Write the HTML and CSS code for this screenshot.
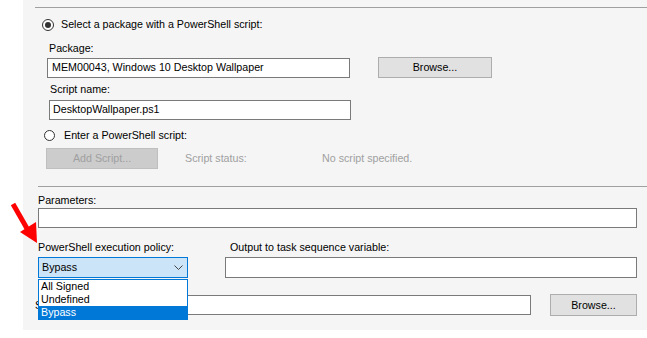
FILE: index.html
```html
<!DOCTYPE html>
<html lang="en">
<head>
    <meta charset="UTF-8">
    <title>Run PowerShell Script</title>
    <link rel="stylesheet" href="styles.css">
</head>
<body>
    <div class="page">
        <div class="panel">
            <div class="group">
                <div class="radio-row first">
                    <span class="radio checked"></span>
                    <span>Select a package with a PowerShell script:</span>
                </div>

                <div class="label pkg-label">Package:</div>
                <div class="pkg-row">
                    <div class="textbox pkg-box">MEM00043, Windows 10 Desktop Wallpaper</div>
                    <div class="btn browse-btn">Browse...</div>
                </div>

                <div class="label script-label">Script name:</div>
                <div class="textbox script-box">DesktopWallpaper.ps1</div>

                <div class="radio-row second">
                    <span class="radio"></span>
                    <span>Enter a PowerShell script:</span>
                </div>

                <div class="add-row">
                    <div class="btn disabled add-btn">Add Script...</div>
                    <span class="dim status-label">Script status:</span>
                    <span class="dim">No script specified.</span>
                </div>
            </div>

            <div class="separator"></div>

            <div class="fields">
                <div class="label params-label">Parameters:</div>
                <div class="textbox params-box"></div>

                <div class="labels-row">
                    <div class="label policy-label">PowerShell execution policy:</div>
                    <div class="label">Output to task sequence variable:</div>
                </div>
                <div class="combo-row">
                    <div class="combo">
                        <span>Bypass</span>
                        <svg class="chevron" width="9" height="5" viewBox="0 0 9 5">
                            <path d="M0.5 0.5 L4.5 4.5 L8.5 0.5" fill="none" stroke="#444" stroke-width="1"/>
                        </svg>
                    </div>
                    <div class="textbox output-box"></div>
                </div>

                <div class="start-row">
                    <!-- mostly hidden behind the open list -->
                    <div class="start-label"><span>Start in:</span></div>
                    <div class="textbox start-box"></div>
                    <div class="btn browse-small">Browse...</div>
                </div>
            </div>

            <!-- open list of the execution policy combo -->
            <div class="dropdown">
                <div class="option">All Signed</div>
                <div class="option">Undefined</div>
                <div class="option selected">Bypass</div>
            </div>
        </div>

        <svg class="arrow" width="40" height="50" viewBox="0 0 40 50">
            <line x1="13" y1="9" x2="29" y2="37" stroke="#f00" stroke-width="5"/>
            <polygon points="20,37 36,27 37,48" fill="#f00"/>
        </svg>
    </div>
</body>
</html>
```

FILE: styles.css
```css
* {
    margin: 0;
    padding: 0;
    box-sizing: border-box;
}

body {
    font-family: 'Liberation Sans', Arial, sans-serif;
    font-size: 10.7px;
    line-height: 13px;
    color: #000;
    background: white;
}

.page {
    position: relative;
    width: 647px;
    height: 338px;
}

.panel {
    position: relative;
    margin-left: 23px;
    width: 624px;
    height: 330px;
    background: #f5f5f5;
    overflow: hidden;
}

.group {
    margin-left: 12px;
    padding-top: 7px;
}

.group > .radio-row:first-child {
    border-top: 1px solid #a0a0a0;
}

.radio-row {
    display: flex;
    align-items: center;
    height: 13px;
}

.radio-row.first {
    padding-top: 10px;
    height: 24px;
    padding-left: 7px;
    gap: 7px;
}

.radio-row.second {
    margin-top: 9px;
    padding-left: 9px;
    gap: 9px;
}

.radio {
    width: 12px;
    height: 12px;
    border: 1px solid #333;
    border-radius: 50%;
    background: white;
    display: flex;
    align-items: center;
    justify-content: center;
}

.radio-row.second .radio {
    width: 11px;
    height: 11px;
}

.radio.checked::after {
    content: '';
    width: 6px;
    height: 6px;
    border-radius: 50%;
    background: #333;
}

.label {
    height: 13px;
    white-space: nowrap;
}

.pkg-label {
    margin-top: 11px;
    margin-left: 14px;
}

.pkg-row {
    display: flex;
    margin-top: 2px;
    margin-left: 12px;
}

.textbox {
    height: 20px;
    background: white;
    border: 1px solid #7a7a7a;
    padding: 2px 4px;
    white-space: nowrap;
}

.pkg-box {
    width: 303px;
    margin-top: 1px;
}

.btn {
    display: flex;
    align-items: center;
    justify-content: center;
    height: 21px;
    background: #e1e1e1;
    border: 1px solid #adadad;
}

.browse-btn {
    width: 114px;
    margin-left: 28px;
}

.script-label {
    margin-top: 5px;
    margin-left: 15px;
}

.script-box {
    width: 302px;
    margin-top: 4px;
    margin-left: 14px;
    padding-left: 3px;
}

.add-row {
    display: flex;
    align-items: center;
    margin-top: 6px;
    margin-left: 11px;
}

.btn.disabled {
    background: #cccccc;
    border-color: #bfbfbf;
    color: #a0a0a0;
}

.add-btn {
    width: 112px;
}

.dim {
    color: #a0a0a0;
}

.status-label {
    margin-left: 27px;
    width: 137px;
}

.separator {
    margin-top: 17px;
    margin-left: 15px;
    border-top: 1px solid #a0a0a0;
}

.fields {
    padding-left: 15px;
}

.params-label {
    margin-top: 7px;
}

.params-box {
    width: 599px;
    margin-top: 1px;
}

.labels-row {
    display: flex;
    margin-top: 13px;
}

.policy-label {
    width: 192px;
}

.combo-row {
    display: flex;
    gap: 37px;
    margin-top: 3px;
}

.combo {
    display: flex;
    align-items: center;
    justify-content: space-between;
    width: 150px;
    height: 21px;
    background: #cce4f7;
    border: 1px solid #0078d7;
    padding: 0 4px 0 3px;
}

.output-box {
    width: 412px;
    height: 21px;
}

.start-row {
    display: flex;
    align-items: center;
    margin-top: 16px;
    height: 22px;
}

.start-label {
    margin-left: -3px;
    width: 3px;
    height: 13px;
    overflow: hidden;
    white-space: nowrap;
    margin-right: 52px;
}

.start-box {
    width: 441px;
}

.browse-small {
    width: 87px;
    height: 22px;
    margin-left: 19px;
}

.dropdown {
    position: absolute;
    left: 15px;
    top: 279px;
    width: 150px;
    height: 41px;
    background: white;
    border: 1px solid #0078d7;
}

.option {
    height: 13px;
    padding-left: 2px;
    line-height: 13px;
}

.option.selected {
    background: #0078d7;
    color: white;
}

.arrow {
    position: absolute;
    left: 0;
    top: 195px;
}
```
